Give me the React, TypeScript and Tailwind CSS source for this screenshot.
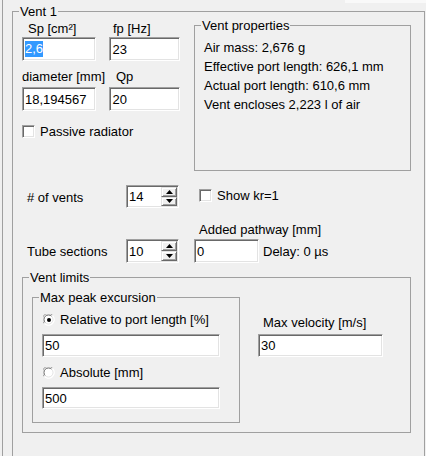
import React from 'react';

const sunken =
  'bg-white border border-t-[#a0a0a0] border-l-[#a0a0a0] border-r-white border-b-white shadow-[inset_1px_1px_0_#696969,inset_-1px_-1px_0_#e3e3e3]';

function Edit({ value, className, selected }: { value: string; className: string; selected?: boolean }) {
  return (
    <div className={`flex items-center pl-[2px] ${sunken} ${className}`}>
      {selected ? <span className="bg-[#3399ff] text-white leading-[16px]">{value}</span> : <span>{value}</span>}
    </div>
  );
}

function Arrow({ down }: { down?: boolean }) {
  return (
    <svg width="7" height="4" viewBox="0 0 7 4">
      <polygon points={down ? '0,0 7,0 3.5,4' : '3.5,0 7,4 0,4'} fill="#000" />
    </svg>
  );
}

function SpinButton({ down }: { down?: boolean }) {
  return (
    <div className="flex-1 flex items-center justify-center bg-[#f0f0f0] border border-t-[#e3e3e3] border-l-[#e3e3e3] border-r-[#696969] border-b-[#696969] shadow-[inset_1px_1px_0_white,inset_-1px_-1px_0_#a0a0a0]">
      <Arrow down={down} />
    </div>
  );
}

function Spinner({ value, className }: { value: string; className: string }) {
  return (
    <div className={`flex p-px ${sunken} ${className}`}>
      <div className="flex-1 flex items-center pl-px">{value}</div>
      <div className="w-[16px] flex flex-col">
        <SpinButton />
        <SpinButton down />
      </div>
    </div>
  );
}

function Checkbox() {
  return <div className={`w-[13px] h-[13px] shrink-0 ${sunken}`} />;
}

function Radio({ checked }: { checked?: boolean }) {
  return (
    <svg width="12" height="12" viewBox="0 0 12 12" className="shrink-0">
      <circle cx="6" cy="6" r="5.5" fill="white" />
      <path d="M1.1 9.5 A5.5 5.5 0 0 1 9.5 1.1" fill="none" stroke="#a0a0a0" strokeWidth="1" />
      <path d="M9.5 1.1 A5.5 5.5 0 0 1 1.1 9.5" fill="none" stroke="#ffffff" strokeWidth="1" />
      <path d="M2.3 8.7 A4.3 4.3 0 0 1 8.7 2.3" fill="none" stroke="#696969" strokeWidth="1" />
      <path d="M8.7 2.3 A4.3 4.3 0 0 1 2.3 8.7" fill="none" stroke="#e3e3e3" strokeWidth="1" />
      {checked && <circle cx="6" cy="6" r="2" fill="#000" />}
    </svg>
  );
}

function Group({ title, className, children }: { title: string; className: string; children?: React.ReactNode }) {
  return (
    <fieldset className={`border border-[#a0a0a0] ${className}`}>
      <legend className="ml-[6px] px-px leading-[15px]">{title}</legend>
      {children}
    </fieldset>
  );
}

export default function App() {
  return (
    <div className="w-[426px] h-[456px] overflow-hidden bg-[#f0f0f0] pl-[2px] text-[13px] leading-[15px] text-black whitespace-nowrap font-['Liberation_Sans',Arial,sans-serif]">
      <div className="h-full border-l border-[#a0a0a0]">
        <div className="h-[3px] ml-[342px] bg-[#f9f9f9]" />
        <Group title="Vent 1" className="ml-[9px] mt-px w-[413px] h-[480px]">
          <div className="pl-[9px]">
            <div className="flex">
              {/* left column */}
              <div className="w-[158px] pt-[2px]">
                <div className="flex">
                  <div className="w-[75px] shrink-0 pl-[6px]">Sp [cm²]</div>
                  <div className="ml-[13px] pl-[3px]">fp [Hz]</div>
                </div>
                <div className="flex gap-[13px] mt-px">
                  <Edit value="2,6" selected className="w-[75px] h-[24px]" />
                  <Edit value="23" className="w-[71px] h-[24px]" />
                </div>
                <div className="flex mt-[8px]">
                  <div className="w-[75px] shrink-0">diameter [mm]</div>
                  <div className="ml-[13px] pl-[6px]">Qp</div>
                </div>
                <div className="flex gap-[13px] mt-[3px]">
                  <Edit value="18,194567" className="w-[75px] h-[24px]" />
                  <Edit value="20" className="w-[71px] h-[24px]" />
                </div>
                <div className="flex items-center h-[15px] mt-[13px]">
                  <Checkbox />
                  <span className="ml-[5px]">Passive radiator</span>
                </div>
              </div>

              <Group title="Vent properties" className="ml-[14px] -mt-px w-[217px] h-[153px]">
                <div className="pl-[9px] pt-[5px] leading-[19px]">
                  <div>Air mass: 2,676 g</div>
                  <div>Effective port length: 626,1 mm</div>
                  <div>Actual port length: 610,6 mm</div>
                  <div>Vent encloses 2,223 l of air</div>
                </div>
              </Group>
            </div>

            <div className="flex h-[23px] mt-[14px]">
              <div className="w-[104px] pl-[5px] pt-[5px]"># of vents</div>
              <Spinner value="14" className="w-[53px] h-[23px]" />
              <div className="ml-[20px] mt-[3px] flex items-center h-[15px]">
                <Checkbox />
                <span className="ml-[5px]">Show kr=1</span>
              </div>
            </div>

            <div className="ml-[177px] mt-[14px]">Added pathway [mm]</div>

            <div className="flex items-center h-[24px] mt-[2px]">
              <div className="w-[104px] pl-[5px]">Tube sections</div>
              <Spinner value="10" className="w-[53px] h-[24px]" />
              <Edit value="0" className="ml-[15px] w-[65px] h-[24px]" />
              <span className="ml-[4px]">Delay: 0 µs</span>
            </div>

            <Group title="Vent limits" className="mt-[7px] w-[389px] h-[163px]">
              <div className="flex pl-[9px] pt-[5px]">
                <Group title="Max peak excursion" className="w-[208px] h-[133px]">
                  <div className="pl-[9px] pt-[7px]">
                    <div className="flex items-center h-[15px]">
                      <div className="ml-px flex">
                        <Radio checked />
                      </div>
                      <span className="ml-[5px]">Relative to port length [%]</span>
                    </div>
                    <Edit value="50" className="mt-[7px] w-[178px] h-[23px]" />
                    <div className="flex items-center h-[15px] mt-[8px]">
                      <div className="ml-px flex">
                        <Radio />
                      </div>
                      <span className="ml-[5px]">Absolute [mm]</span>
                    </div>
                    <Edit value="500" className="mt-[7px] w-[178px] h-[22px]" />
                  </div>
                </Group>
                <div className="ml-[18px] pt-[25px]">
                  <div className="pl-[5px]">Max velocity [m/s]</div>
                  <Edit value="30" className="mt-[4px] w-[125px] h-[23px]" />
                </div>
              </div>
            </Group>
          </div>
        </Group>
      </div>
    </div>
  );
}
